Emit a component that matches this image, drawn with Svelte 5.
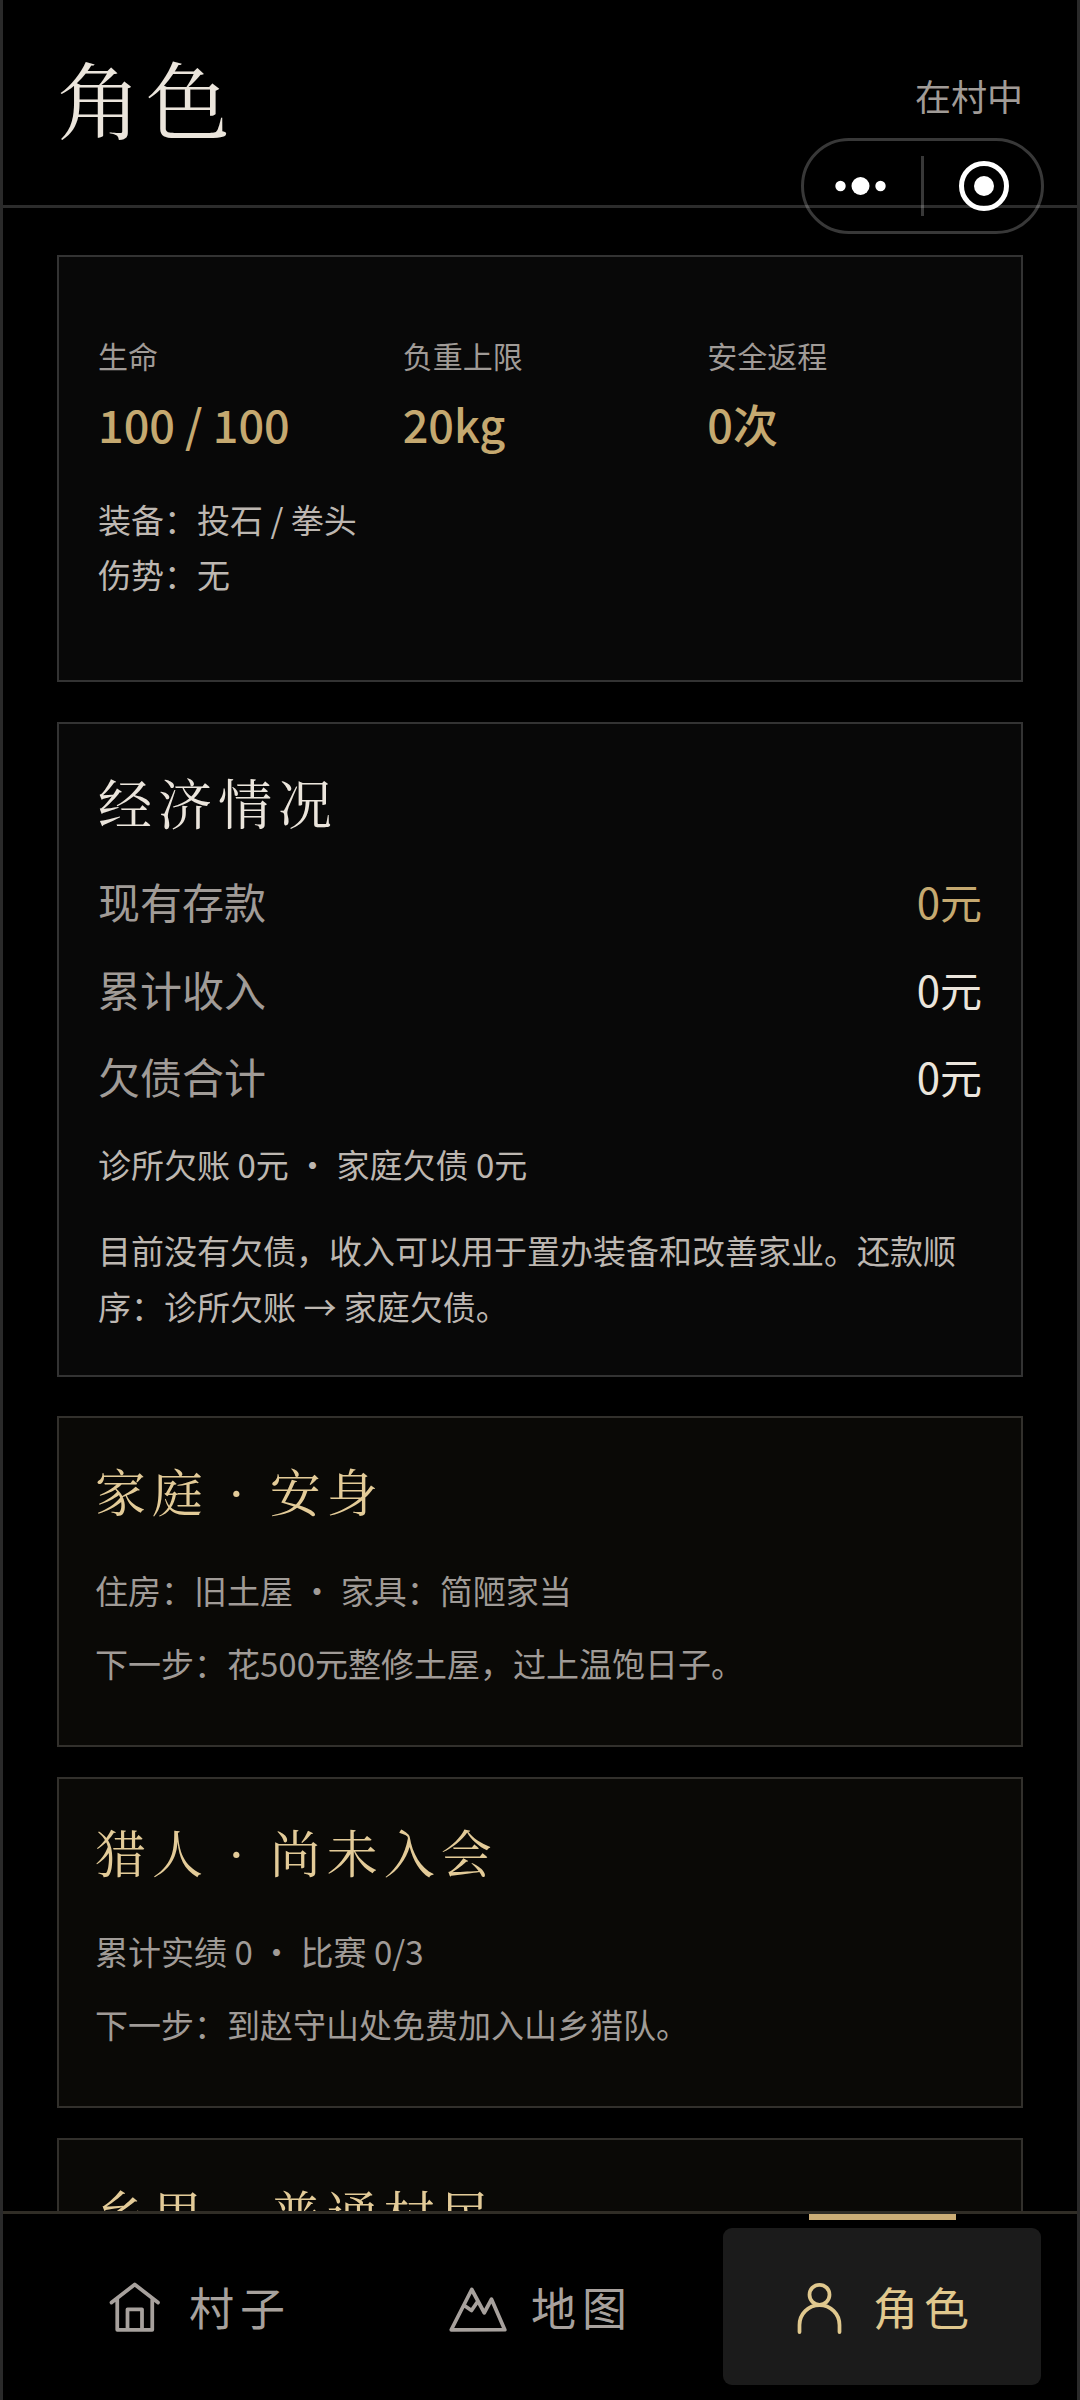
<script>
  const stats = [
    { label: '生命', value: '100 / 100' },
    { label: '负重上限', value: '20kg' },
    { label: '安全返程', value: '0次' },
  ];
  const money = [
    { label: '现有存款', value: '0元', gold: true },
    { label: '累计收入', value: '0元' },
    { label: '欠债合计', value: '0元' },
  ];
  const paths = [
    {
      title: '家庭 · 安身',
      lines: ['住房：旧土屋 · 家具：简陋家当', '下一步：花500元整修土屋，过上温饱日子。'],
    },
    {
      title: '猎人 · 尚未入会',
      lines: ['累计实绩 0 · 比赛 0/3', '下一步：到赵守山处免费加入山乡猎队。'],
    },
    { title: '乡里 · 普通村民', lines: [] },
  ];
  const tabs = [
    { id: 'village', label: '村子' },
    { id: 'map', label: '地图' },
    { id: 'role', label: '角色', active: true },
  ];
</script>

{#snippet dotted(text)}
  {#each text.split('·') as part, i}{#if i}<span class="dot">·</span>{/if}{part}{/each}
{/snippet}

<div class="page">
  <header>
    <h1>角色</h1>
    <span class="place">在村中</span>
    <div class="capsule">
      <svg viewBox="0 0 243 96" width="243" height="96">
        <rect x="1.5" y="1.5" width="240" height="93" rx="46.5" class="rim" />
        <path d="M121.5 18v60" class="rim" />
        <g fill="#fff">
          <circle cx="39.5" cy="48" r="5.2" />
          <circle cx="59.5" cy="48" r="9" />
          <circle cx="79.5" cy="48" r="5.2" />
          <circle cx="183" cy="48" r="10" />
        </g>
        <circle cx="183" cy="48" r="22.5" fill="none" stroke="#fff" stroke-width="5" />
      </svg>
    </div>
  </header>

  <main>
    <section class="card status">
      <div class="stats">
        {#each stats as s}
          <div>
            <div class="label">{s.label}</div>
            <div class="value">{s.value}</div>
          </div>
        {/each}
      </div>
      <p>装备：投石 / 拳头</p>
      <p>伤势：无</p>
    </section>

    <section class="card economy">
      <h2>经济情况</h2>
      {#each money as m}
        <div class="row">
          <span>{m.label}</span>
          <span class="amount" class:gold={m.gold}>{m.value}</span>
        </div>
      {/each}
      <p class="debts">{@render dotted('诊所欠账 0元 · 家庭欠债 0元')}</p>
      <p class="hint">目前没有欠债，收入可以用于置办装备和改善家业。还款顺序：诊所欠账 → 家庭欠债。</p>
    </section>

    <div class="paths">
      {#each paths as p}
        <section class="card path">
          <h3>{p.title}</h3>
          {#each p.lines as line}
            <p>{@render dotted(line)}</p>
          {/each}
        </section>
      {/each}
    </div>
  </main>

  <nav>
    {#each tabs as t}
      <div class="tab" class:active={t.active}>
        <svg viewBox="0 0 24 24" width="60" height="60">
          {#if t.id === 'village'}
            <path d="M2.6 10.2L11.9 3l9.3 7.2M4.9 9v12.1h14V9M9 21v-8.1h5.8V21" />
          {:else if t.id === 'map'}
            <path d="M1.7 21.1L9.9 5l5 9.3 2.9-5.4 5.3 12.2zM7.2 11.6l2.6 1.8 2.6-3.8" />
          {:else}
            <circle cx="12.2" cy="7.1" r="4" />
            <path d="M4.2 22v-2.8a8 8 0 0 1 16 0V22" />
          {/if}
        </svg>
        <span>{t.label}</span>
      </div>
    {/each}
  </nav>
</div>

<style>
  :global(body) {
    background: #000;
  }
  .page {
    box-sizing: border-box;
    width: 1080px;
    height: 2400px;
    overflow: hidden;
    display: flex;
    flex-direction: column;
    background: #000;
    border-left: 3px solid #2a2a2a;
    border-right: 3px solid #2a2a2a;
    font-family: 'Noto Sans CJK SC', sans-serif;
    font-size: 33px;
  }
  h1,
  h2,
  h3,
  p {
    margin: 0;
    font-weight: 400;
  }
  h1,
  h2,
  h3 {
    font-family: 'Noto Serif CJK SC', 'Noto Serif SC', 'Source Han Serif SC', 'Songti SC', 'Noto Sans CJK SC', serif;
    font-weight: 400;
  }
  header {
    position: relative;
    box-sizing: border-box;
    flex: none;
    height: 208px;
    padding: 0 54px 15px 54px;
    border-bottom: 3px solid #2c2c2c;
    display: flex;
    align-items: center;
    justify-content: space-between;
  }
  h1 {
    padding-top: 4px;
    font-size: 84px;
    line-height: 120px;
    letter-spacing: 5px;
    color: #ebe5dc;
  }
  .place {
    font-size: 36px;
    line-height: 54px;
    color: #a09b97;
  }
  .capsule {
    position: absolute;
    right: 33px;
    top: 138px;
    height: 96px;
  }
  .rim {
    fill: none;
    stroke: rgba(255, 255, 255, 0.22);
    stroke-width: 3;
  }
  main {
    flex: 1;
    min-height: 0;
    overflow: hidden;
    padding: 47px 54px 0 54px;
    display: flex;
    flex-direction: column;
    gap: 39.5px;
  }
  .card {
    box-sizing: border-box;
    flex: none;
    border: 2px solid #333;
    background: #080808;
    padding: 39px;
  }
  .status {
    height: 427px;
    padding-top: 77px;
    color: #bdb7b1;
  }
  .stats {
    display: grid;
    grid-template-columns: repeat(3, 1fr);
    gap: 30px;
    margin-bottom: 36px;
  }
  .label {
    font-size: 30px;
    line-height: 42px;
    margin-bottom: 15px;
    color: #a09b97;
  }
  .value {
    font-size: 45px;
    line-height: 65px;
    font-weight: 500;
    color: #c5a970;
  }
  .status p {
    line-height: 54.5px;
  }
  .economy {
    height: 655px;
    color: #bdb7b1;
  }
  h2 {
    padding-top: 1px;
    font-size: 54px;
    line-height: 76px;
    letter-spacing: 6px;
    margin-bottom: 18px;
    color: #ebe5dc;
  }
  .row {
    height: 87.6px;
    display: flex;
    align-items: center;
    justify-content: space-between;
    font-size: 42px;
    line-height: 60px;
    color: #a09b97;
  }
  .amount {
    color: #ebe5dc;
  }
  .gold {
    color: #c5a970;
  }
  .debts {
    line-height: 56px;
    margin: 16px 0 30px;
  }
  .hint {
    line-height: 56px;
  }
  .paths {
    display: flex;
    flex-direction: column;
    gap: 30px;
  }
  .path {
    height: 331px;
    padding: 36px 36px 0;
    border-color: #32302c;
    background: #0a0906;
    color: #a09b97;
  }
  h3 {
    font-size: 51px;
    line-height: 72px;
    letter-spacing: 6px;
    margin-bottom: 36px;
    color: #e3cb98;
  }
  .path p {
    line-height: 56px;
    margin-bottom: 16.5px;
  }
  nav {
    box-sizing: border-box;
    flex: none;
    height: 189px;
    border-top: 3px solid #302d26;
    padding: 14px 36px 15px;
    display: grid;
    grid-template-columns: repeat(3, 1fr);
    gap: 24px;
  }
  .tab {
    position: relative;
    height: 157px;
    border-radius: 9px;
    display: flex;
    align-items: center;
    justify-content: center;
    gap: 24px;
    font-size: 45px;
    line-height: 64px;
    letter-spacing: 6px;
    color: #a7a19d;
  }
  .tab svg {
    fill: none;
    stroke: currentColor;
    stroke-width: 1.5;
    stroke-linecap: round;
    stroke-linejoin: round;
  }
  .active {
    background: #1b1b1b;
    color: #e0c88e;
  }
  .active::before {
    content: '';
    position: absolute;
    top: -14px;
    left: 86px;
    width: 147px;
    height: 6px;
    background: #ccae76;
  }
</style>
